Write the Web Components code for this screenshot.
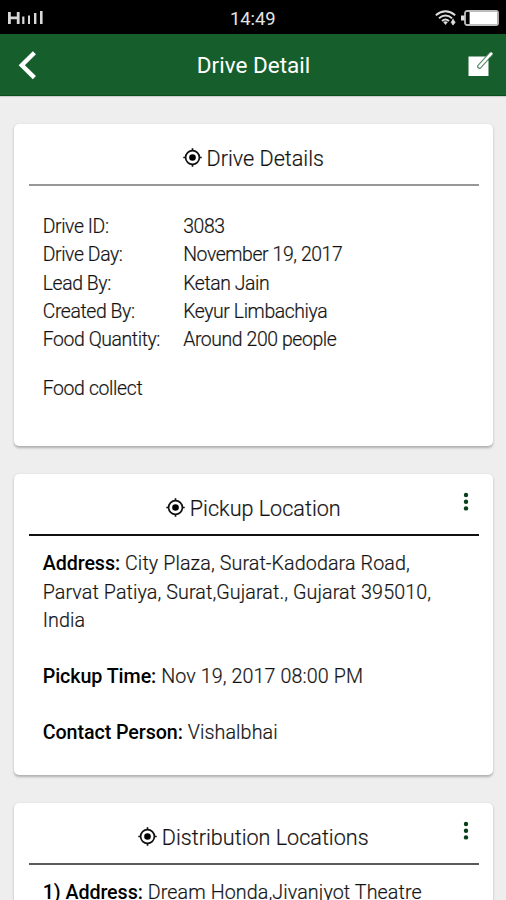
<!DOCTYPE html>
<html lang="en"><head><meta charset="utf-8"><title>Drive Detail</title>
<style>
html,body{margin:0;height:900px;overflow:hidden;background:#eeeeee}
body{font-family:Roboto,"Liberation Sans",sans-serif;font-weight:300;color:#111}
</style></head><body>
<drive-app></drive-app>
<script>
const define=(name,html)=>customElements.define(name,class extends HTMLElement{
  constructor(){super();const t=document.createElement('template');t.innerHTML=html;this.attachShadow({mode:'open'}).append(t.content.cloneNode(true));}
});

define('status-bar',`<style>
:host{display:grid;grid-template-columns:1fr auto 1fr;align-items:center;height:34px;padding:2px 7px 0 8px;box-sizing:border-box;background:#000;color:#e4e4e4;font-weight:400;font-size:18.4px}
svg{display:block}.r{display:flex;justify-content:flex-end;gap:5px;align-items:center}span{transform:translateX(-.7px)}
</style>
<svg width="36" height="14" fill="#d8d8d8"><path d="M0 1h2.8v4.6h6V1h2.8v12H8.8V8.2h-6V13H0z"/><path d="M14.2 5.5h2.2v7.5h-2.2zM20 4.5h2v8.5h-2zM26 2h2.4v11H26zM32 0h2.6v13H32z"/></svg>
<span>14:49</span>
<div class="r">
<svg width="21" height="16" viewBox="0 0 21 16" fill="none" stroke="#dedede" stroke-width="1.9"><path d="M.8 5.2Q10.5-2.5 20.2 5.2M4 8.2Q10.5 2.7 17 8.2M7 11Q10.5 7.8 14 11"/><path d="M10.5 15l-2.3-3q2.3-1.6 4.6 0z" fill="#dedede" stroke="none"/><path d="M18 8.5v5M18 9.5l2.2 2.8-2.2 2.8-1.8-2.8z" fill="#dedede" stroke-width=".8"/></svg>
<svg width="38" height="16" viewBox="0 0 38 16"><path d="M0 5.5h4v5H0z" fill="#ddd"/><rect x="4" y="1" width="33" height="14" rx="2" fill="none" stroke="#bdbdbd" stroke-width="1.8"/><path d="M8.6 2h27.4v12H8.6z" fill="#fff"/></svg>
</div>`);

define('app-header',`<style>
:host{display:grid;grid-template-columns:1fr auto 1fr;align-items:center;height:61.5px;padding:1px 13px 0 18px;box-sizing:border-box;background:#165f2d;color:#fff;font-weight:400;font-size:22.5px;border-bottom:1px solid #0c4d20;box-shadow:0 1px 1px #0002}
svg{display:block}.e{justify-self:end}span{transform:translateX(-2px)}
</style>
<svg width="20" height="30" viewBox="0 0 20 30"><path d="M16.4 2.8L3.8 15.2 16.4 27.6" fill="none" stroke="#fff" stroke-width="4.4"/></svg>
<span>Drive Detail</span>
<svg class="e" width="25" height="26" viewBox="0 0 25 26"><path d="M.5 4.5h20V24H.5z" fill="#fff"/><path d="M22.6 2.2L11.4 14.6" fill="none" stroke="#4f8560" stroke-width="4.6" stroke-linecap="round"/><path d="M20.5 4.5h1.6v4.2h-1.6z" fill="#165f2d"/><path d="M23.2 1.6L11.6 14.4" stroke="#fff" stroke-width="2.6" stroke-linecap="round"/></svg>`);

define('target-icon',`<style>:host{display:block;width:19px;height:19px}svg{display:block}</style>
<svg width="19" height="19" viewBox="0 0 19 19"><circle cx="9.5" cy="9.5" r="6.9" fill="none" stroke="#111" stroke-width="1.7"/><circle cx="9.5" cy="9.5" r="3.3" fill="#000"/><path d="M9.5.3v2.4M9.5 16.3v2.4M.3 9.5h2.4M16.3 9.5h2.4" stroke="#111" stroke-width="1.7"/></svg>`);

define('more-button',`<style>:host{display:block;position:absolute;right:24px;top:18px}svg{display:block}</style>
<svg width="6" height="20" viewBox="0 0 6 20" fill="#08401a"><circle cx="3" cy="3" r="2.2"/><circle cx="3" cy="9.7" r="2.2"/><circle cx="3" cy="16.4" r="2.2"/></svg>`);

define('detail-card',`<style>
:host{display:block;position:relative;box-sizing:border-box;background:#fff;border-radius:5px;box-shadow:0 1.5px 2.5px #0004;padding:0 14.5px;-webkit-text-stroke:.2px #222}
header{display:flex;justify-content:center;align-items:center;gap:4.5px;height:60px;padding-top:9px;box-sizing:border-box;font-size:21.6px;line-height:28px}
target-icon{margin-top:-2.5px}
hr{margin:0;border:0;height:2px;background:var(--rule,#111)}
.b{padding:var(--gap,13.6px) 13.5px 0 14.2px}
</style><header><target-icon></target-icon><slot name="title"></slot></header><hr><div class="b"><slot></slot></div><slot name="action"></slot>`);

define('info-row',`<style>:host{display:grid;grid-template-columns:140.5px 1fr;font-size:19.4px;letter-spacing:-.4px;line-height:28.15px}</style>
<slot name="label"></slot><slot></slot>`);

define('text-field',`<style>:host{display:block;font-size:19.7px;line-height:28.15px;letter-spacing:.1px;margin-bottom:28.1px;white-space:nowrap}
b{font-weight:500;letter-spacing:-.08px;color:#000;-webkit-text-stroke:0}</style><b><slot name="label"></slot></b> <slot></slot>`);

define('drive-app',`<style>
:host{display:block;height:900px;overflow:hidden;background:#eee}
main{display:flex;flex-direction:column;gap:28px;padding:28.5px 13px 0 14px}
.one{height:322px;--rule:#979797;--gap:27.2px}
.two{height:301px;--gap:14.4px}.three{height:301px;--rule:#5b5b5b}
p{margin:21px 0 0;font-size:19.4px;letter-spacing:-.35px;line-height:28.15px}
</style>
<status-bar></status-bar><app-header></app-header>
<main>
<detail-card class="one"><span slot="title">Drive Details</span>
<info-row><span slot="label">Drive ID:</span>3083</info-row>
<info-row><span slot="label">Drive Day:</span>November 19, 2017</info-row>
<info-row><span slot="label">Lead By:</span>Ketan Jain</info-row>
<info-row><span slot="label">Created By:</span>Keyur Limbachiya</info-row>
<info-row><span slot="label">Food Quantity:</span>Around 200 people</info-row>
<p>Food collect</p></detail-card>
<detail-card class="two"><span slot="title">Pickup Location</span><more-button slot="action"></more-button>
<text-field><span slot="label">Address:</span>City Plaza, Surat-Kadodara Road,<br>Parvat Patiya, Surat,Gujarat., Gujarat 395010,<br>India</text-field>
<text-field><span slot="label">Pickup Time:</span>Nov 19, 2017 08:00 PM</text-field>
<text-field><span slot="label">Contact Person:</span>Vishalbhai</text-field></detail-card>
<detail-card class="three"><span slot="title">Distribution Locations</span><more-button slot="action"></more-button>
<text-field><span slot="label">1) Address:</span>Dream Honda,Jivanjyot Theatre</text-field></detail-card>
</main>`);
</script></body></html>
